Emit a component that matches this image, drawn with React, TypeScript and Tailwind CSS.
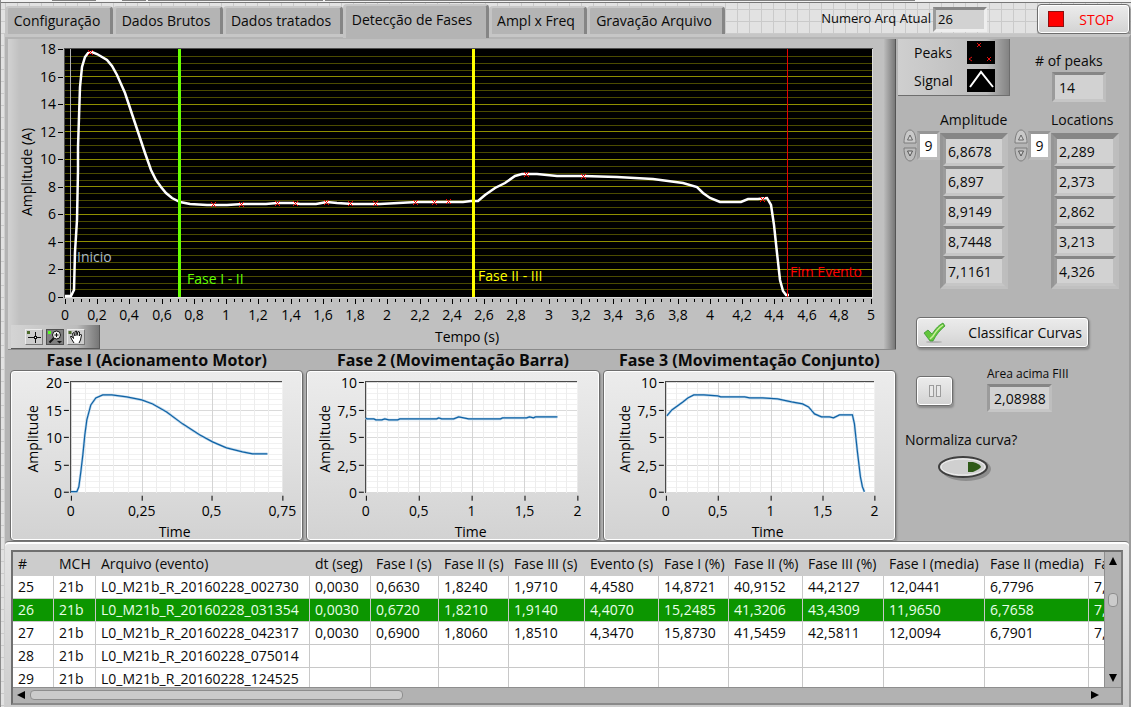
import type { ReactNode } from "react";
import clsx from "clsx";

const TABS = [
    { name: "Configuração",      width: "w-[108px]" },
    { name: "Dados Brutos",      width: "w-[110px]" },
    { name: "Dados tratados",    width: "w-[120px]" },
    { name: "Detecção de Fases", width: "w-[146px]" },
    { name: "Ampl x Freq",       width: "w-[98px]" },
    { name: "Gravação Arquivo",  width: "w-[138px]" },
];
const ACTIVE_TAB = "Detecção de Fases";

const SIGNAL =
    "65,296 71,296 74,290 75,252 77,220 78,170 78,147 80,87 82,67 85,57 88,53 92,52 97,54 107,60 112,66 117,75 121,84 125,93 135,123 145,153 151,170 156,180 161,187 166,193 172,198 180,202 190,204 207,205 227,205 243,204 266,204 277,203 293,203 300,204 316,204 327,202 337,203 353,204 380,204 417,202 463,202 471,201 478,201 485,195 495,188 505,183 515,176 522,174 537,174 557,176 583,176 617,177 653,179 683,183 697,187 703,193 710,198 720,202 741,202 748,199 758,199 767,198 771,205 774,225 777,253 780,280 783,291 786,295 789,295";

const PEAKS = [
    [90, 52], [213, 204], [241, 204], [277, 203], [295, 203], [326, 202], [350, 203],
    [375, 203], [415, 202], [434, 202], [448, 201], [526, 174], [583, 176], [762, 199],
];

type Phase = {
    title: string;
    left: number;
    right: number;
    labelX: number;
    yTicks: string[];
    xTicks: string[];
    cols: number;
    points: string;
};

const PHASES: Phase[] = [
    {
        title: "Fase I (Acionamento Motor)",
        left: 61, right: 273, labelX: 28, cols: 15,
        yTicks: ["20", "15", "10", "5", "0"],
        xTicks: ["0", "0,25", "0,5", "0,75"],
        points: "61,122 67,122 69,117 71,102 73,85 75,65 77,50 81,35 86,28 93,25 102,25 117,27 132,30 143,34 157,42 173,54 190,65 203,72 217,78 233,82 243,84 258,84",
    },
    {
        title: "Fase 2 (Movimentação Barra)",
        left: 60, right: 272, labelX: 24, cols: 20,
        yTicks: ["10", "7,5", "5", "2,5", "0"],
        xTicks: ["0", "0,5", "1", "1,5", "2"],
        points: "60,48 61,49 68,49 70,50 76,50 79,49 83,50 92,50 94,49 131,49 133,48 136,49 148,49 153,47 158,48 163,49 195,49 197,48 221,48 224,47 228,48 230,47 252,47",
    },
    {
        title: "Fase 3 (Movimentação Conjunto)",
        left: 63, right: 272, labelX: 27, cols: 20,
        yTicks: ["10", "7,5", "5", "2,5", "0"],
        xTicks: ["0", "0,5", "1", "1,5", "2"],
        points: "64,46 69,40 80,32 85,28 91,25 101,25 115,26 118,27 142,27 147,28 157,28 160,28 175,29 189,32 200,34 206,37 212,44 219,47 227,47 231,48 237,45 250,45 252,54 255,82 258,107 260,117 262,122",
    },
];

const COLUMNS = [
    { name: "#",              width: "w-[41px]" },
    { name: "MCH",            width: "w-[42px]" },
    { name: "Arquivo (evento)", width: "w-[214px]" },
    { name: "dt (seg)",       width: "w-[61px]" },
    { name: "Fase I (s)",     width: "w-[68px]" },
    { name: "Fase II (s)",    width: "w-[70px]" },
    { name: "Fase III (s)",   width: "w-[76px]" },
    { name: "Evento (s)",     width: "w-[74px]" },
    { name: "Fase I (%)",     width: "w-[70px]" },
    { name: "Fase II (%)",    width: "w-[74px]" },
    { name: "Fase III (%)",   width: "w-[81px]" },
    { name: "Fase I (media)", width: "w-[101px]" },
    { name: "Fase II (media)", width: "w-[104px]" },
    { name: "Fase III (media)", width: "w-[110px]" },
];

const ROWS = [
    ["25", "21b", "L0_M21b_R_20160228_002730", "0,0030", "0,6630", "1,8240", "1,9710", "4,4580", "14,8721", "40,9152", "44,2127", "12,0441", "6,7796", "7,"],
    ["26", "21b", "L0_M21b_R_20160228_031354", "0,0030", "0,6720", "1,8210", "1,9140", "4,4070", "15,2485", "41,3206", "43,4309", "11,9650", "6,7658", "7,"],
    ["27", "21b", "L0_M21b_R_20160228_042317", "0,0030", "0,6900", "1,8060", "1,8510", "4,3470", "15,8730", "41,5459", "42,5811", "12,0094", "6,7901", "7,"],
    ["28", "21b", "L0_M21b_R_20160228_075014", "", "", "", "", "", "", "", "", "", "", ""],
    ["29", "21b", "L0_M21b_R_20160228_124525", "", "", "", "", "", "", "", "", "", "", ""],
];
const SELECTED = "26";

const GRID_BG =
    "bg-[#e2e2e2] bg-[linear-gradient(#cacaca_1px,transparent_1px),linear-gradient(90deg,#cacaca_1px,transparent_1px)] bg-[size:12px_12px] bg-[position:0_9px,4px_0]";
const SUNKEN =
    "border-[3px] border-t-[#868686] border-l-[#9b9b9b] border-r-[#bebebe] border-b-[#c6c6c6] bg-[#d2d2d2] outline-none";
const RAISED =
    "rounded border border-[#6e6e6e] bg-linear-to-b from-[#ececec] via-[#e0e0e0] to-[#d2d2d2] shadow-[inset_0_0_0_1px_#ffffff,1px_2px_2px_#8a8a8a]";

function Tabs() {
    return (
        <div role="tablist" className="flex items-end pl-1">
            {TABS.map((t) => {
                const active = t.name === ACTIVE_TAB;
                return (
                    <button
                        key={t.name}
                        role="tab"
                        aria-selected={active}
                        className={clsx(
                            t.width,
                            "rounded-t-sm border-t-2 border-t-[#c8c8c8] border-l-3 border-l-[#c4c4c4] border-r-3 border-r-[#858585] bg-[#b4b4b4] pr-1 text-center whitespace-nowrap",
                            active ? "relative -mb-1 h-[34px] pr-2 pb-1.5" : "h-7 pb-0.5"
                        )}
                    >
                        {t.name}
                    </button>
                );
            })}
        </div>
    );
}

function SignalGraph() {
    const gridLines = Array.from({ length: 35 }, (_, i) => i + 1);
    const xMinor = Array.from({ length: 101 }, (_, i) => i);
    const xLabels = Array.from({ length: 26 }, (_, i) => i);

    return (
        <svg viewBox="8 39 888 310" className="block w-full text-[14px]" role="img" aria-label="Amplitude (A) x Tempo (s)">
            <rect x="64" y="48" width="809" height="250" fill="#dcdcdc" />
            <path d="M64 298V48H873V49H65V298Z" fill="#505050" />
            <rect x="65" y="49" width="807" height="248" fill="#000" />
            <g shapeRendering="crispEdges">
                {gridLines.map((i) => (
                    <rect key={i} x="65" y={Math.round(49 + i * 6.87)} width="807" height="1" fill={i % 4 === 0 ? "#8f8f00" : "#4b4b00"} />
                ))}
                <rect x="70" y="49" width="1" height="248" fill="#b4b4b4" />
            </g>

            {/* Traces */}
            <polyline points={SIGNAL} fill="none" stroke="#fff" strokeWidth="2.500" />
            {PEAKS.map(([x, y]) => (
                <path key={x} d={`M${x - 2} ${y - 2}l5 5M${x + 3} ${y - 2}l-5 5`} stroke="#ff0000" strokeWidth="1" />
            ))}

            {/* Cursors */}
            <g shapeRendering="crispEdges">
                <rect x="178" y="49" width="3" height="248" fill="#66ff00" />
                <rect x="472" y="49" width="3" height="248" fill="#ffff00" />
                <rect x="787" y="49" width="1" height="248" fill="#e60000" />
            </g>
            <text x="77" y="262" fill="#a9b9c6">Inicio</text>
            <text x="187" y="284" fill="#66ff00">Fase I - II</text>
            <text x="478" y="281" fill="#ffff00">Fase II - III</text>
            <text x="790" y="277" fill="#ff0000">Fim Evento</text>

            {/* Scales */}
            {Array.from({ length: 10 }, (_, i) => (
                <g key={i}>
                    <rect x="58" y={Math.round(49 + i * 27.5)} width="5" height="1" />
                    <text x="56" y={Math.round(54 + i * 27.5)} textAnchor="end">{18 - i * 2}</text>
                </g>
            ))}
            {xMinor.map((i) => (
                <rect key={i} x={Math.round(65 + i * 8.06)} y="299" width="1" height={i % 4 === 0 ? 5 : 3} />
            ))}
            {xLabels.map((i) => (
                <text key={i} x={Math.round(65 + i * 32.24)} y="320" textAnchor="middle">
                    {String(i / 5).replace(".", ",")}
                </text>
            ))}
            <text x="467" y="342" textAnchor="middle">Tempo (s)</text>
            <text transform="translate(32 172) rotate(-90)" textAnchor="middle">Amplitude (A)</text>
        </svg>
    );
}

function GraphPalette() {
    const tool = "flex h-4 w-[18px] items-center justify-center border";
    const raised = "border-t-[#ececec] border-l-[#ececec] border-r-[#777] border-b-[#777] bg-[#cdcdcd]";
    return (
        <div className="absolute bottom-0 left-[3px] flex h-6 w-[89px] items-center gap-[3px] border-r border-b border-[#5a5a5a] bg-linear-to-r from-[#d4d4d4] via-[#bcbcbc] via-75% to-[#777] pl-3.5">
            <button aria-label="Cursor" className={clsx(tool, raised)}>
                <svg width="16" height="14" viewBox="0 0 16 14" fill="none" stroke="#111">
                    <path d="M2 7.500H15M9.500 2V13" />
                    <rect x="1" y="1" width="3" height="3" fill="#4d6b2c" stroke="none" />
                    <rect x="8.500" y="6.500" width="2" height="2" fill="#fff" stroke="#111" />
                </svg>
            </button>
            <button aria-label="Zoom" className={clsx(tool, "border-[#505050] bg-[#808080]")}>
                <svg width="16" height="14" viewBox="0 0 16 14" fill="none" stroke="#111">
                    <path d="M7 8L2.500 12.500" strokeWidth="2" />
                    <circle cx="9.500" cy="5" r="4" fill="#eee" />
                    <path d="M7.500 5H11.500M9.500 3V7" />
                    <path d="M10 11H15L12.500 13.500Z" fill="#111" stroke="none" />
                    <rect x="1" y="1" width="3" height="3" fill="#55ff22" stroke="none" />
                </svg>
            </button>
            <button aria-label="Pan" className={clsx(tool, raised)}>
                <svg width="16" height="14" viewBox="0 0 16 14" fill="#fff" stroke="#111" strokeLinejoin="round">
                    <path d="M6 13L3.500 9L2.500 6.500L4 6.500L5.500 8.500L4.500 3.500L5.500 2.500L7 6L7 1.500L8.500 1L9 5.500L10 1.500L11.500 2L11.200 6L12.500 4L13.500 5L12.500 10L11 13" />
                    <rect x="0.500" y="1" width="3" height="3" fill="#4d6b2c" stroke="none" />
                </svg>
            </button>
        </div>
    );
}

function PhaseChart({ phase }: { phase: Phase }) {
    const { left, right } = phase;
    const width = right - left;
    const xStep = width / (phase.xTicks.length - 1);
    const perTick = phase.cols / (phase.xTicks.length - 1);

    return (
        <section>
            <h2 className="h-5 text-center text-base leading-5 font-bold whitespace-nowrap">{phase.title}</h2>
            <div className={RAISED}>
                <svg viewBox="1 1 292 169" className="block w-full overflow-visible text-[14px]" role="img" aria-label={phase.title}>
                    <rect x={left} y="12" width={width} height="111" fill="#fff" />
                    <g shapeRendering="crispEdges">
                        {Array.from({ length: 21 }, (_, i) => (
                            <rect key={i} x={left} y={Math.round(12 + i * 5.5)} width={width} height="1" fill={i % 5 === 0 ? "#dadada" : "#f1f1f1"} />
                        ))}
                        {Array.from({ length: phase.cols }, (_, i) => (
                            <rect key={i} x={Math.round(left + (i * width) / phase.cols)} y="12" width="1" height="111" fill={i % perTick === 0 ? "#d4d4d4" : "#ededed"} />
                        ))}
                        <path d={`M${left - 1} 123V11H${right}V12H${left}V123Z`} fill="#4a4a4a" />
                    </g>
                    <polyline points={phase.points} fill="none" stroke="#b9d4ea" strokeWidth="2.500" />
                    <polyline points={phase.points} fill="none" stroke="#0f62a4" strokeWidth="1.200" />
                    {phase.yTicks.map((label, i) => (
                        <g key={label}>
                            <rect x={left - 7} y={Math.round(12 + i * 27.5)} width="5" height="1" />
                            <text x={left - 9} y={Math.round(18 + i * 27.5)} textAnchor="end">{label}</text>
                        </g>
                    ))}
                    {phase.xTicks.map((label, i) => (
                        <g key={label}>
                            <rect x={Math.round(left + i * xStep)} y="126" width="1" height="5" />
                            <text x={Math.round(left + i * xStep)} y="146" textAnchor="middle">{label}</text>
                        </g>
                    ))}
                    <text x="165" y="167" textAnchor="middle">Time</text>
                    <text transform={`translate(${phase.labelX} 69) rotate(-90)`} textAnchor="middle">Amplitude</text>
                </svg>
            </div>
        </section>
    );
}

function Legend() {
    return (
        <div className="flex h-[57px] w-28 flex-col justify-between border-r border-b border-[#6e6e6e] bg-linear-to-r from-[#cfcfcf] via-[#bcbcbc] via-80% to-[#838383] py-[2px] pr-3.5 pl-4 leading-6">
            <div className="flex items-center justify-between">
                <span>Peaks</span>
                <svg width="28" height="24" viewBox="0 0 28 24">
                    <rect width="28" height="23" fill="#000" />
                    <path d="M10 2l4 4M14 2l-4 4M20 16l4 4M24 16l-4 4M5 16l-3 2l3 2" stroke="#e01010" fill="none" />
                </svg>
            </div>
            <div className="flex items-center justify-between">
                <span>Signal</span>
                <svg width="28" height="24" viewBox="0 0 28 24">
                    <rect width="28" height="23" fill="#000" />
                    <path d="M3 18L14 3L26 18" stroke="#fff" strokeWidth="2" fill="none" />
                </svg>
            </div>
        </div>
    );
}

function Stepper({ label }: { label: string }) {
    return (
        <div className="flex flex-col gap-px">
            <button aria-label={`${label} +`} className="block">
                <svg width="14" height="16" viewBox="0 0 14 16">
                    <path d="M1 14C1 7 3 1 7 1S13 7 13 14Z" fill="#c9c9c9" stroke="#7d7d7d" />
                    <path d="M7 6L4.500 11H9.500Z" fill="#d8d8d8" stroke="#666" />
                </svg>
            </button>
            <button aria-label={`${label} -`} className="block">
                <svg width="14" height="16" viewBox="0 0 14 16">
                    <path d="M1 2C1 9 3 15 7 15S13 9 13 2Z" fill="#bdbdbd" stroke="#7d7d7d" />
                    <path d="M7 10L4.500 5H9.500Z" fill="#d8d8d8" stroke="#555" />
                </svg>
            </button>
        </div>
    );
}

function ArrayControl({ label, values }: { label: string; values: string[] }) {
    return (
        <div className="flex">
            <div className="flex items-center self-start pt-[17px]">
                <Stepper label={label} />
                <input
                    aria-label={`${label} index`}
                    defaultValue="9"
                    className="h-[29px] w-[23px] border-[3px] border-t-[#969696] border-l-[#a6a6a6] border-r-[#bcbcbc] border-b-[#bcbcbc] bg-white text-center outline-none"
                />
            </div>
            <div className="w-[68px]">
                <div className="h-[21px] leading-4 whitespace-nowrap">{label}</div>
                <div className="border-[3px] border-t-[#868686] border-l-[#959595] border-r-[#bdbdbd] border-b-[#c0c0c0]">
                    {values.map((v) => (
                        <input key={v} readOnly aria-label={label} value={v} className={clsx(SUNKEN, "block h-[30px] w-full border-4 pl-0.5")} />
                    ))}
                </div>
            </div>
        </div>
    );
}

function Sidebar() {
    return (
        <aside className="flex w-[232px] shrink-0 flex-col pl-px">
            <div className="flex">
                <Legend />
                <div className="flex flex-col pt-3 pl-[25px]">
                    <label htmlFor="peaks" className="leading-5">
                        # of peaks
                    </label>
                    <input id="peaks" readOnly value="14" className={clsx(SUNKEN, "mt-px ml-[17px] h-[30px] w-[54px] pl-1")} />
                </div>
            </div>

            <div className="mt-2.5 flex gap-[6px] pl-[5px]">
                <ArrayControl label="Amplitude" values={["6,8678", "6,897", "8,9149", "8,7448", "7,1161"]} />
                <ArrayControl label="Locations" values={["2,289", "2,373", "2,862", "3,213", "4,326"]} />
            </div>

            <button className={clsx(RAISED, "mt-7 ml-[18px] flex h-[31px] w-[173px] items-center justify-between pr-1.5 pl-1.5")}>
                <svg width="24" height="24" viewBox="0 0 24 24">
                    <ellipse cx="11" cy="21" rx="8" ry="1" fill="#999" opacity="0.600" />
                    <path d="M1 12L5 9L9 13C13 7 16 4 20 2L22 5C17 9 13 14 10 20L7 20Z" fill="#63c53c" stroke="#2f8f2a" strokeWidth="0.700" />
                    <path d="M7 18L10 15C13 10 17 6 20 4" stroke="#cbef9c" strokeWidth="1.500" fill="none" />
                </svg>
                Classificar Curvas
            </button>

            <div className="mt-4 flex pl-[18px]">
                <button aria-label="Pausar" className={clsx(RAISED, "mt-3 flex h-[30px] w-[37px] items-center justify-center")}>
                    <svg width="14" height="14" viewBox="0 0 14 14" fill="#e8e8e8" stroke="#9c9c9c">
                        <rect x="1.500" y="1.500" width="4" height="11" />
                        <rect x="8.500" y="1.500" width="4" height="11" />
                    </svg>
                </button>
                <div className="flex flex-col pl-[34px]">
                    <label htmlFor="area" className="text-[12px] leading-5">
                        Area acima FIII
                    </label>
                    <input id="area" readOnly value="2,08988" className={clsx(SUNKEN, "h-7 w-[65px] pl-1")} />
                </div>
            </div>

            <label className="mt-[18px] flex w-fit flex-col pl-[7px] leading-5">
                Normaliza curva?
                <input type="checkbox" className="peer sr-only" />
                <svg width="56" height="28" viewBox="0 0 56 28" className="mt-1 ml-8">
                    <ellipse cx="29" cy="15" rx="25" ry="12" fill="#8d8d8d" />
                    <ellipse cx="26" cy="13" rx="24" ry="10" fill="#d0d0d0" stroke="#3f3f3f" strokeWidth="2" />
                    <ellipse cx="26" cy="13" rx="22" ry="8" fill="none" stroke="#f2f2f2" />
                    <path d="M31 8H36Q43 10 44 13Q43 15 36 18H31Z" fill="#2f5a18" />
                </svg>
            </label>
        </aside>
    );
}

function Arrow({ d, label }: { d: string; label: string }) {
    return (
        <button aria-label={label}>
            <svg width="8" height="8" viewBox="0 0 8 8" className="block">
                <path d={d} />
            </svg>
        </button>
    );
}

function ResultsTable() {
    return (
        <div className="border-2 border-t-[#6f6f6f] border-l-[#6f6f6f] border-r-[#7d7d7d] border-b-[#8a8a8a] bg-[#b2b2b2]">
            <div className="flex h-[135px]">
                <div className="min-w-0 flex-1 overflow-hidden bg-white">
                    <table className="w-max table-fixed border-separate border-spacing-0">
                        <thead>
                            <tr className="h-6 bg-[#cccccc]">
                                {COLUMNS.map((c) => (
                                    <th key={c.name} className={clsx(c.width, "p-0 pl-[5px] text-left leading-5 font-normal whitespace-nowrap")}>
                                        {c.name}
                                    </th>
                                ))}
                            </tr>
                        </thead>
                        <tbody>
                            {ROWS.map((row) => (
                                <tr key={row[0]} className={clsx("h-[23px]", row[0] === SELECTED ? "bg-[#0c9600] text-[#e9ffe9]" : "bg-white")}>
                                    {row.map((cell, i) => (
                                        <td key={i} className="border-r border-b border-[#c8c8c8] p-0 pl-[5px] leading-5 whitespace-nowrap">
                                            {cell}
                                        </td>
                                    ))}
                                </tr>
                            ))}
                        </tbody>
                    </table>
                </div>
                <div className="flex w-[17px] flex-col items-center border-l border-[#8e8e8e] py-[5px]">
                    <Arrow label="Acima" d="M4 0L8 8H0Z" />
                    <div className="mt-7 h-3.5 w-2.5 rounded-sm border border-[#8e8e8e] bg-[#cbcbcb]" />
                    <div className="flex-1" />
                    <Arrow label="Abaixo" d="M4 8L8 0H0Z" />
                </div>
            </div>
            <div className="flex h-4 items-center border-t border-[#8e8e8e] pr-[22px] pl-1">
                <Arrow label="Esquerda" d="M0 4L8 0V8Z" />
                <div className="ml-[5px] h-2.5 w-[373px] rounded-sm border border-[#8e8e8e] bg-[#cbcbcb]" />
                <div className="flex-1" />
                <Arrow label="Direita" d="M8 4L0 0V8Z" />
            </div>
        </div>
    );
}

function Header({ children }: { children: ReactNode }) {
    return (
        <header className="flex h-[31px] items-end justify-between">
            {children}
            <div className="flex items-center self-stretch pt-px pr-px">
                <label htmlFor="file-number" className="text-[13px]">
                    Numero Arq Atual
                </label>
                <input
                    id="file-number"
                    readOnly
                    value="26"
                    className={clsx(SUNKEN, "ml-0.5 h-[25px] w-[54px] border-r-[#eeeeee] border-b-[#eeeeee] pl-0.5 text-[13px]")}
                />
                <button className={clsx(RAISED, "ml-[50px] flex h-[30px] w-[93px] items-center justify-between pr-[15px] pl-2.5 text-[#ff0000]")}>
                    <span className="h-4 w-4 border border-[#8c1010] bg-[#ff0000]" />
                    STOP
                </button>
            </div>
        </header>
    );
}

export default function App() {
    return (
        <div className={clsx(GRID_BG, "flex min-h-screen flex-col border-l border-[#8a8a8a] font-['Open_Sans','Noto_Sans',sans-serif] text-[14px] text-[#0a0a0a]")}>
            <div className="flex h-[3px] gap-0.5 border-b border-[#777] bg-[#f2f2f2] pl-[51px]">
                <i className="h-px w-11 bg-[#808080]" />
                <i className="ml-6 h-px w-6 bg-[#808080]" />
                <i className="h-px w-[175px] bg-[#808080]" />
                <i className="h-px w-[590px] bg-[#808080]" />
            </div>
            <Header>
                <Tabs />
            </Header>

            <main className="ml-[3px] flex flex-1 flex-col border-t-[3px] border-r-2 border-l border-t-[#c6c6c6] border-r-[#9c9c9c] border-l-[#cfcfcf] bg-[#b4b4b4]">
                <div className="flex pt-0.5">
                    <div className="min-w-0 flex-1 pr-px pl-[3px]">
                        <div className="relative border-b border-b-[#8a8a8a] bg-linear-to-r from-[#d2d2d2] to-[#c0c0c0] to-[12px]">
                            <div className="absolute inset-y-0 right-0 w-3 border-r border-[#555] bg-linear-to-r from-[#bcbcbc] to-[#787878]" />
                            <SignalGraph />
                            <GraphPalette />
                        </div>
                        <div className="grid grid-cols-3 gap-[3px] pl-0.5">
                            {PHASES.map((p) => (
                                <PhaseChart key={p.title} phase={p} />
                            ))}
                        </div>
                    </div>
                    <Sidebar />
                </div>

                <footer className="flex-1 rounded-t border-t border-[#777] bg-linear-to-b from-[#e4e4e4] to-[#cdcdcd] px-1.5 pt-2 pb-[2px] shadow-[inset_0_2px_0_#ffffff]">
                    <ResultsTable />
                </footer>
            </main>
        </div>
    );
}
